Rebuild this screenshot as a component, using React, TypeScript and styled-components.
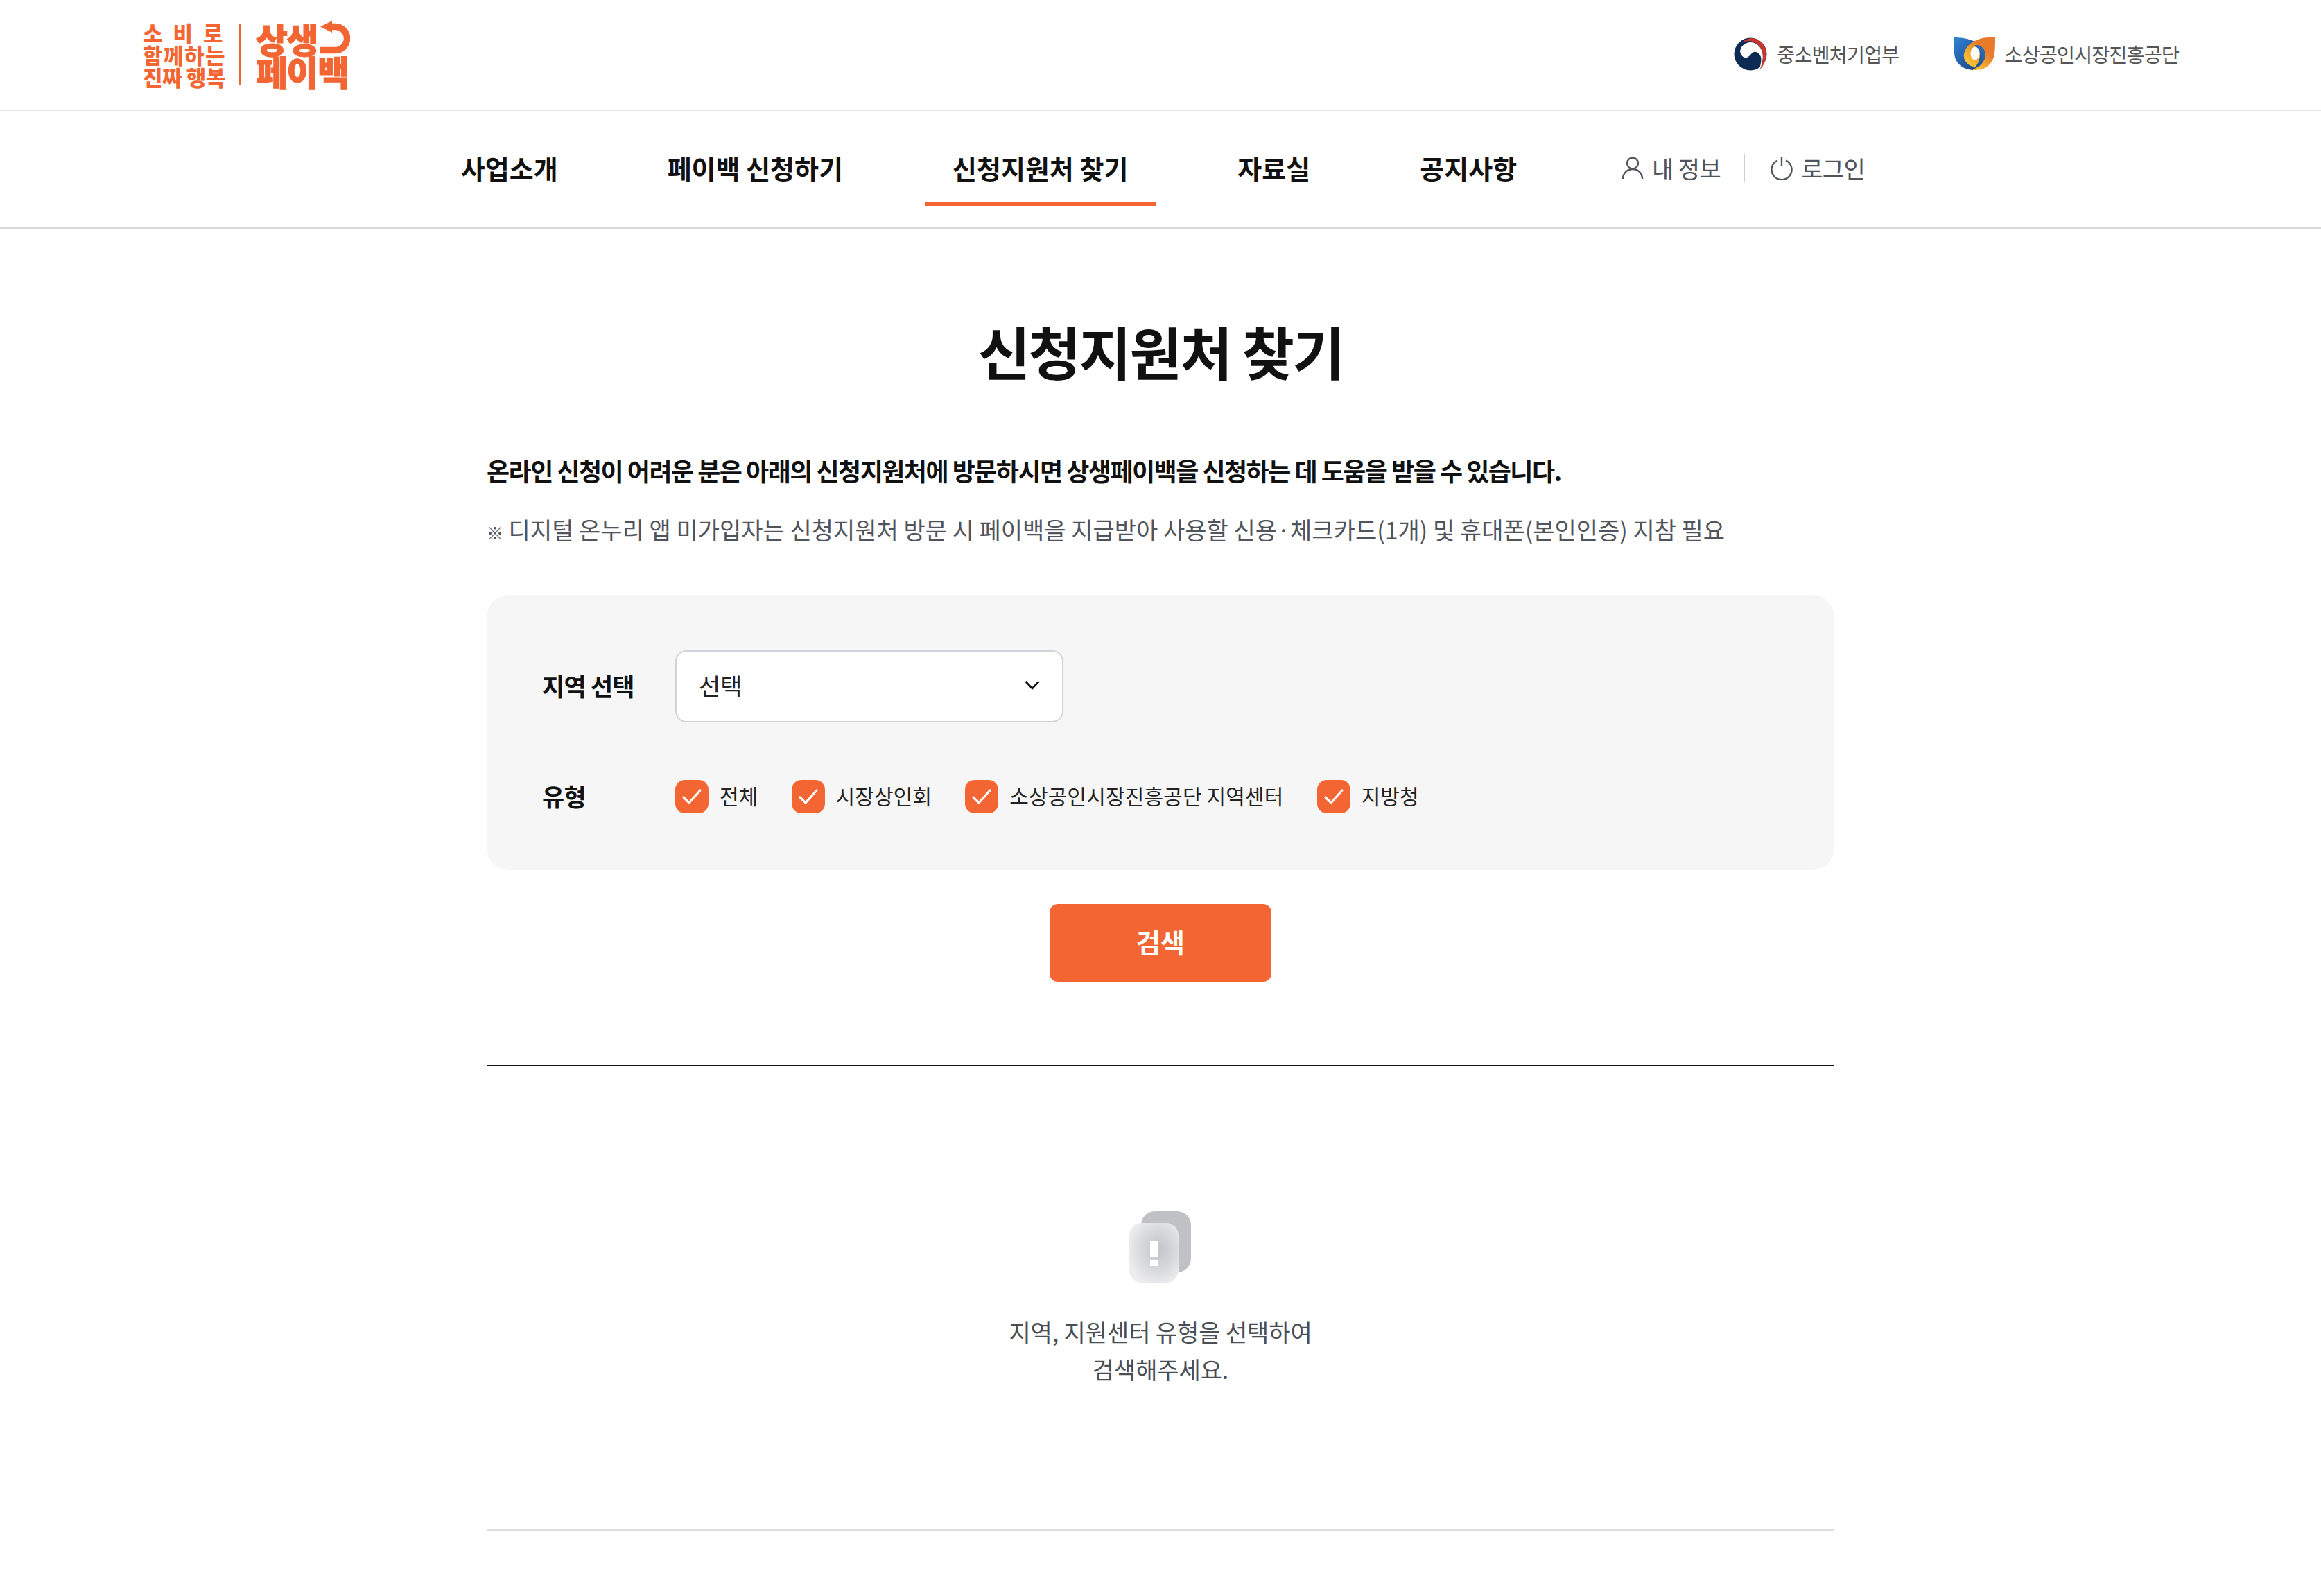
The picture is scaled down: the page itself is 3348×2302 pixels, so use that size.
import React from 'react';
import styled, { createGlobalStyle } from 'styled-components';

const FONT = '"Noto Sans CJK KR", "Noto Sans", sans-serif';
const ORANGE = '#f36633';

const Global = createGlobalStyle`
  html, body { margin: 0; padding: 0; background: #fff; }
  body { font-family: ${FONT}; color: #111; }
  * { box-sizing: border-box; }
`;

const Page = styled.div`
  width: 100%;
  height: 2302px;
  overflow: hidden;
  background: #fff;
`;

const TopBar = styled.header`
  height: 160px;
  padding: 0 205px;
  display: flex;
  align-items: center;
  justify-content: space-between;
  border-bottom: 2px solid #dfe2e6;
`;

const Logo = styled.div`
  display: flex;
  align-items: center;
  color: ${ORANGE};
  font-weight: 900;
`;

const Slogan = styled.div`
  width: 122px;
  display: flex;
  flex-direction: column;
  font-size: 31px;
  line-height: 32px;
  font-weight: 900;
  white-space: nowrap;
`;

const SloganLine = styled.span<{ $spacing: number }>`
  letter-spacing: ${p => p.$spacing}px;
  margin-left: 1px;
`;

const LogoDivider = styled.div`
  width: 2px;
  height: 88px;
  margin: 0 22px 0 18px;
  background: ${ORANGE};
`;

const Brand = styled.div`
  position: relative;
  width: 136px;
  display: flex;
  flex-direction: column;
  font-size: 50px;
  line-height: 47px;
  font-weight: 900;
  letter-spacing: -1.5px;
  white-space: nowrap;
  -webkit-text-stroke: 1px ${ORANGE};
`;

const BrandArrow = styled.svg`
  position: absolute;
  left: 92px;
  top: -4px;
  width: 44px;
  height: 52px;
`;

const Partners = styled.div`
  display: flex;
  align-items: center;
  gap: 80px;
  margin-bottom: 3px;
`;

const Partner = styled.div`
  display: flex;
  align-items: center;
  gap: 13px;
  font-size: 28.5px;
  letter-spacing: -1.05px;
  color: #555;
`;

const NavBar = styled.nav`
  height: 170px;
  padding: 0 33px 4px 0;
  display: flex;
  align-items: center;
  justify-content: center;
  border-bottom: 2px solid #d8d8d8;
`;

const NavItems = styled.ul`
  list-style: none;
  margin: 0 111px 0 0;
  padding: 0;
  display: flex;
  gap: 78px;
`;

const NavItem = styled.li<{ $active?: boolean }>`
  position: relative;
  padding: 0 40px;
  font-size: 38px;
  line-height: 56px;
  font-weight: 700;
  color: #111;
  white-space: nowrap;
  &::after {
    content: '';
    display: ${p => (p.$active ? 'block' : 'none')};
    position: absolute;
    left: 0;
    right: 0;
    bottom: -27px;
    height: 6px;
    background: ${ORANGE};
  }
`;

const UserMenu = styled.div`
  display: flex;
  align-items: center;
  color: #50545c;
  font-size: 34px;
  letter-spacing: -0.6px;
`;

const UserLink = styled.span`
  display: flex;
  align-items: center;
  gap: 12px;
  white-space: nowrap;
`;

const UserDivider = styled.span`
  width: 2px;
  height: 40px;
  margin: 0 37px 0 33px;
  background: #ccd0d6;
`;

const Main = styled.main`
  width: 1944px;
  margin: 0 auto;
`;

const Title = styled.h1`
  margin: 0;
  padding-top: 116px;
  font-size: 82px;
  line-height: 120px;
  font-weight: 700;
  letter-spacing: -2.5px;
  text-align: center;
  color: #111;
`;

const Lead = styled.p`
  margin: 85px 0 0;
  font-size: 36px;
  line-height: 54px;
  font-weight: 700;
  letter-spacing: -1.53px;
  white-space: nowrap;
`;

const Note = styled.p`
  margin: 32px 0 0;
  font-size: 34px;
  line-height: 54px;
  letter-spacing: 0;
  color: #50545c;
  white-space: nowrap;
`;

const NoteMark = styled.span`
  font-size: 24px;
  font-weight: 900;
`;

const Panel = styled.section`
  margin-top: 63px;
  height: 397px;
  padding: 80px 80px 0;
  border-radius: 32px;
  background: #f6f6f6;
  display: flex;
  flex-direction: column;
  gap: 83px;
`;

const FieldRow = styled.div`
  display: flex;
  align-items: center;
`;

const FieldLabel = styled.div`
  width: 192px;
  height: 48px;
  font-size: 35px;
  line-height: 45px;
  font-weight: 700;
  letter-spacing: -0.8px;
  white-space: nowrap;
`;

const Select = styled.div`
  width: 560px;
  height: 104px;
  padding: 0 32px 4px 32px;
  display: flex;
  align-items: center;
  justify-content: space-between;
  border: 2px solid #d0d3d9;
  border-radius: 16px;
  background: #fff;
  font-size: 34px;
  color: #222;
`;

const Checks = styled.div`
  display: flex;
  align-items: center;
  gap: 48px;
`;

const CheckItem = styled.label`
  display: flex;
  align-items: flex-start;
  gap: 16px;
  font-size: 30px;
  line-height: 45px;
  letter-spacing: 0.15px;
  color: #222;
  white-space: nowrap;
`;

const CheckBox = styled.span`
  width: 48px;
  height: 48px;
  display: flex;
  align-items: center;
  justify-content: center;
  border-radius: 14px;
  background: ${ORANGE};
`;

const Actions = styled.div`
  margin-top: 49px;
  display: flex;
  justify-content: center;
`;

const SearchButton = styled.button`
  width: 320px;
  height: 112px;
  padding: 0 0 5px;
  border: 0;
  border-radius: 12px;
  background: ${ORANGE};
  color: #fff;
  font-family: ${FONT};
  font-size: 38px;
  font-weight: 700;
`;

const Results = styled.section`
  margin-top: 120px;
  height: 672px;
  padding-top: 208px;
  display: flex;
  flex-direction: column;
  align-items: center;
  border-top: 2px solid #111;
  border-bottom: 2px solid #ddd;
`;

const EmptyIcon = styled.svg`
  width: 100px;
  height: 114px;
  display: block;
`;

const EmptyText = styled.p`
  margin: 34px 0 0;
  font-size: 34px;
  line-height: 54px;
  letter-spacing: -0.1px;
  text-align: center;
  color: #4a4e55;
`;

const CHECKS = ['전체', '시장상인회', '소상공인시장진흥공단 지역센터', '지방청'];
const NAV = ['사업소개', '페이백 신청하기', '신청지원처 찾기', '자료실', '공지사항'];

export default function App() {
  return (
    <Page>
      <Global />
      <TopBar>
        <Logo>
          <Slogan>
            <SloganLine $spacing={15}>소비로</SloganLine>
            <SloganLine $spacing={1.5}>함께하는</SloganLine>
            <SloganLine $spacing={-0.5}>진짜 행복</SloganLine>
          </Slogan>
          <LogoDivider />
          <Brand>
            <span>상생</span>
            <span>페이백</span>
            <BrandArrow viewBox="0 0 44 52">
              <path d="M14 10.5h8.5a17 17 0 0 1 0 34H1" fill="none" stroke={ORANGE} strokeWidth="9.5" />
              <path d="M1 10.5 18 2v17z" fill={ORANGE} />
            </BrandArrow>
          </Brand>
        </Logo>
        <Partners>
          <Partner>
            <svg width="50" height="48" viewBox="0 0 48 48">
              <circle cx="24" cy="24" r="23.5" fill="#0d2b52" />
              <path d="M9 20C10 12 17 7 24 7c9 0 16 7 17.5 16 1 8-.5 17-4.5 23 2-8 3-14 2-18-2-5-6-8-10-7-4 1-5 6-10 8-5 1-9-3-10-9z" fill="#fff" />
              <path d="M12 8c4-5 9-7 13-7 12 0 22 10 22 23 0 9-4 17-10 23 4-7 6-16 4.500-24C40 14 33 7 24 5c-4-.5-9 .5-12 3z" fill="#c8352e" />
            </svg>
            중소벤처기업부
          </Partner>
          <Partner>
            <svg width="59" height="49" viewBox="0 0 59 49">
              <defs>
                <linearGradient id="sbcBlue" x1="0" y1="0" x2="0.7" y2="1">
                  <stop offset="0" stopColor="#2f82d4" />
                  <stop offset="1" stopColor="#1f4e94" />
                </linearGradient>
                <linearGradient id="sbcOrange" x1="0.85" y1="0.1" x2="0.15" y2="0.9">
                  <stop offset="0.3" stopColor="#e87a2a" />
                  <stop offset="1" stopColor="#f6cf33" />
                </linearGradient>
                <linearGradient id="sbcRing" x1="0.8" y1="0" x2="0.2" y2="1">
                  <stop offset="0" stopColor="#2d6fb8" />
                  <stop offset="1" stopColor="#1e4a8e" />
                </linearGradient>
              </defs>
              <path d="M0 1c10 0 22 2 29 6v41C12 48 1 38 0 24z" fill="url(#sbcBlue)" />
              <path d="M59 1C45 0 31 3 22 11c-7 6-10 16-7 22 3 6 8 10 14 10l-2 5c13 1 25-5 29-16 3-8 3-20 3-31z" fill="url(#sbcOrange)" />
              <path d="M30 12c8-1 15 5 15 14 0 10-9 18-18 21 6-5 10-13 10-21 0-7-3-11-7-11z" fill="url(#sbcRing)" />
              <ellipse cx="30" cy="24" rx="6.500" ry="9.500" fill="#fff" />
            </svg>
            소상공인시장진흥공단
          </Partner>
        </Partners>
      </TopBar>

      <NavBar>
        <NavItems>
          {NAV.map((item, i) => (
            <NavItem key={item} $active={i === 2}>
              {item}
            </NavItem>
          ))}
        </NavItems>
        <UserMenu>
          <UserLink>
            <svg width="32" height="34" viewBox="0 0 32 34" fill="none" stroke="#50545c" strokeWidth="2.4">
              <circle cx="16" cy="10.5" r="8" />
              <path d="M2 33c0-8 6-14 14-14s14 6 14 14" />
            </svg>
            내 정보
          </UserLink>
          <UserDivider />
          <UserLink>
            <svg width="32" height="34" viewBox="0 0 32 34" fill="none" stroke="#50545c" strokeWidth="2.4">
              <path d="M10 6.5a14.5 14.5 0 1 0 12 0" />
              <path d="M16 1v14" />
            </svg>
            로그인
          </UserLink>
        </UserMenu>
      </NavBar>

      <Main>
        <Title>신청지원처 찾기</Title>
        <Lead>온라인 신청이 어려운 분은 아래의 신청지원처에 방문하시면 상생페이백을 신청하는 데 도움을 받을 수 있습니다.</Lead>
        <Note>
          <NoteMark>※</NoteMark> 디지털 온누리 앱 미가입자는 신청지원처 방문 시 페이백을 지급받아 사용할 신용·체크카드(1개) 및 휴대폰(본인인증) 지참 필요
        </Note>

        <Panel>
          <FieldRow>
            <FieldLabel>지역 선택</FieldLabel>
            <Select>
              선택
              <svg width="22" height="14" viewBox="0 0 22 14" fill="none" stroke="#111" strokeWidth="2.6">
                <path d="M1.5 2 11 12l9.5-10" />
              </svg>
            </Select>
          </FieldRow>
          <FieldRow>
            <FieldLabel>유형</FieldLabel>
            <Checks>
              {CHECKS.map(c => (
                <CheckItem key={c}>
                  <CheckBox>
                    <svg width="30" height="24" viewBox="0 0 30 24" fill="none" stroke="#fff" strokeWidth="3.2" strokeLinecap="round">
                      <path d="M3 13l8 8L27 3" />
                    </svg>
                  </CheckBox>
                  {c}
                </CheckItem>
              ))}
            </Checks>
          </FieldRow>
        </Panel>

        <Actions>
          <SearchButton>검색</SearchButton>
        </Actions>

        <Results>
          <EmptyIcon viewBox="0 0 100 114">
            <defs>
              <radialGradient id="glass" cx="0.58" cy="0.45" r="0.62">
                <stop offset="0.1" stopColor="#c4c7cc" />
                <stop offset="0.65" stopColor="#dcdde0" />
                <stop offset="1" stopColor="#ededee" />
              </radialGradient>
            </defs>
            <rect x="22" y="1" width="72" height="88" rx="20" fill="#bfc1c5" />
            <rect x="5" y="18" width="71" height="86" rx="18" fill="url(#glass)" />
            <rect x="35" y="44" width="11" height="23" fill="#fff" />
            <rect x="35" y="71" width="11" height="9" fill="#fff" />
          </EmptyIcon>
          <EmptyText>
            지역, 지원센터 유형을 선택하여
            <br />
            검색해주세요.
          </EmptyText>
        </Results>
      </Main>
    </Page>
  );
}
